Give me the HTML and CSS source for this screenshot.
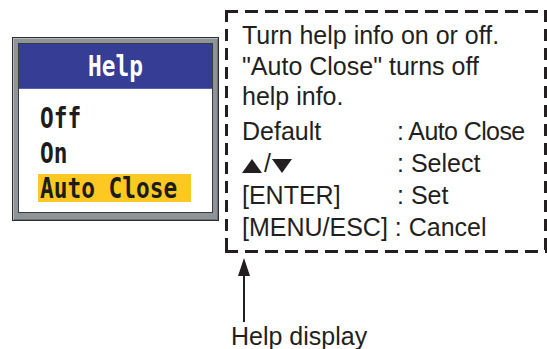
FILE: index.html
```html
<!DOCTYPE html>
<html lang="en">
<head>
    <meta charset="UTF-8">
    <title>Help menu</title>
    <link rel="stylesheet" href="styles.css">
</head>
<body>
    <div class="screen">
        <div class="menu">
            <div class="menu-inner">
                <div class="menu-title"><span>Help</span></div>
                <ul class="menu-list">
                    <li><span>Off</span></li>
                    <li><span>On</span></li>
                    <li class="selected"><span>Auto Close</span></li>
                </ul>
            </div>
        </div>

        <div class="help-col">
            <div class="help-box">
                <p class="help-desc">Turn help info on or off.<br>"Auto Close" turns off<br>help info.</p>
                <div class="help-row"><span class="key">Default</span><span class="tight">: Auto Close</span></div>
                <div class="help-row">
                    <span class="key">
                        <svg class="tri" width="20" height="14" viewBox="0 0 20 14"><polygon points="10,0 0,14 20,14" fill="#231f20"/></svg><span class="slash">/</span><svg class="tri" width="20" height="14" viewBox="0 0 20 14"><polygon points="0,0 20,0 10,14" fill="#231f20"/></svg>
                    </span>
                    <span>: Select</span>
                </div>
                <div class="help-row"><span class="key">[ENTER]</span><span>: Set</span></div>
                <div class="help-row">[MENU/ESC] : Cancel</div>
            </div>
            <svg class="arrow" width="14" height="64" viewBox="0 0 14 64">
                <polygon points="7,0 1,18 13,18" fill="#231f20"/>
                <rect x="6" y="14" width="2" height="50" fill="#231f20"/>
            </svg>
            <div class="caption">Help display</div>
        </div>
    </div>
</body>
</html>
```

FILE: styles.css
```css
body {
    margin: 0;
    background: #fff;
    color: #231f20;
    font-family: 'Liberation Sans', Arial, sans-serif;
}

.screen {
    display: flex;
    align-items: flex-start;
    gap: 6px;
    padding: 10px 0 0 12px;
}

/* LCD style menu window */
.menu {
    margin-top: 27px;
    width: 207px;
    box-sizing: border-box;
    border: 1px solid #2e2e2e;
    padding: 5px 5px 7px;
    background: #8f9498;
    box-shadow: inset 1px 1px 0 #b4b8bb, inset -1px -1px 0 #6c7074;
}

.menu-inner {
    border: 1px solid #3a3a3a;
    background: #fff;
    height: 170px;
    box-sizing: border-box;
}

.menu-title {
    height: 45px;
    background: #353d94;
    border-bottom: 1px solid #5a62b0;
    box-sizing: border-box;
    color: #fff;
    text-align: center;
    line-height: 45px;
}

.menu-title span,
.menu-list span {
    display: inline-block;
    font-family: 'DejaVu Sans Mono', monospace;
    font-weight: bold;
    font-size: 22.8px;
    transform: scaleY(1.22);
}

.menu-list {
    list-style: none;
    margin: 0;
    padding: 15px 0 0 19px;
}

.menu-list li {
    width: 153px;
    height: 28px;
    line-height: 28px;
    padding-left: 2px;
    box-sizing: border-box;
    margin-bottom: 7px;
    color: #1c1c1c;
}

.menu-list li.selected {
    background: #fdc821;
}

/* dashed help panel */
.help-col {
    display: flex;
    flex-direction: column;
}

.help-box {
    width: 322px;
    height: 243px;
    box-sizing: border-box;
    padding: 10px 0 0 17px;
    font-size: 25px;
    white-space: nowrap;
    background:
        repeating-linear-gradient(90deg, #231f20 0 13px, transparent 13px 20px) left top / 100% 3px no-repeat,
        repeating-linear-gradient(90deg, #231f20 0 13px, transparent 13px 20px) left bottom / 100% 3px no-repeat,
        repeating-linear-gradient(180deg, #231f20 0 12px, transparent 12px 19px) left top / 3px 100% no-repeat,
        repeating-linear-gradient(180deg, #231f20 0 12px, transparent 12px 19px) right top / 3px 100% no-repeat;
}

.help-desc {
    margin: 0 0 3px;
    line-height: 30.5px;
}

.help-row {
    display: flex;
    line-height: 32px;
}

.key {
    width: 155px;
    flex-shrink: 0;
}

.tight {
    letter-spacing: -0.6px;
}

.tri {
    vertical-align: -1px;
}

.slash {
    margin: 0 1px 0 2px;
}

.arrow {
    display: block;
    margin: 5px 0 0 12px;
}

.caption {
    margin-left: 6px;
    font-size: 25px;
    line-height: 28px;
}
```
